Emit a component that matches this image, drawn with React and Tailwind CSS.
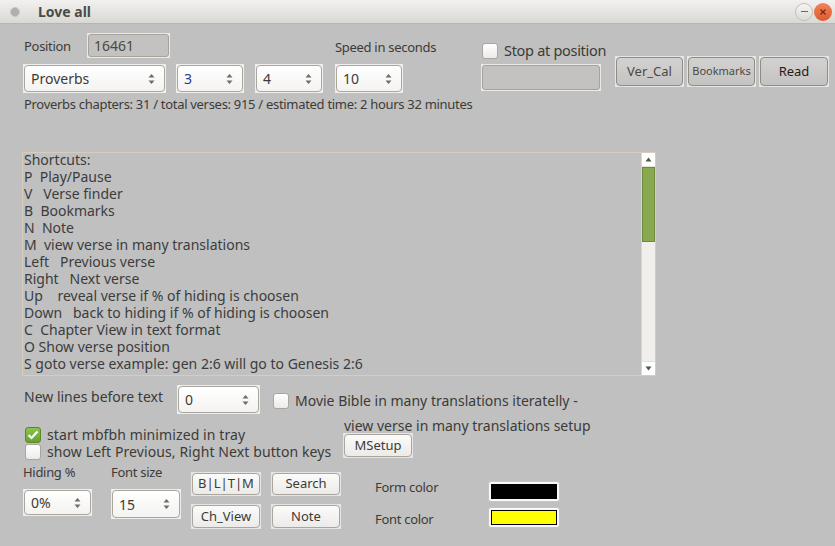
import React from 'react';

const font = { fontFamily: '"Noto Sans", "Open Sans", sans-serif' };

function Arrows() {
  return (
    <svg width="7" height="12" viewBox="0 0 7 12" className="shrink-0">
      <path d="M3.5 1 L6.5 4.5 L0.5 4.5 Z" fill="#6f6c66" />
      <path d="M3.5 11 L6.5 7.5 L0.5 7.5 Z" fill="#6f6c66" />
    </svg>
  );
}

function Spin({ value, w, h, blue }) {
  return (
    <div className={`bg-[#efeeec] p-[1px] ${w} ${h}`}>
      <div className="h-full rounded-[4px] border border-[#aaa59d] bg-gradient-to-b from-white to-[#f4f3f1] flex items-center justify-between pl-[6px] pr-[9px]">
        <span className={`text-[14px] ${blue ? 'text-[#1d3e8a]' : 'text-[#3c3b37]'}`}>{value}</span>
        <Arrows />
      </div>
    </div>
  );
}

function Field({ value, w, h }) {
  return (
    <div className={`bg-[#ebe9e5] p-[1px] ${w} ${h}`}>
      <div className="h-full rounded-[3px] border border-[#a7a29a] bg-[#c3c2c0] flex items-center pl-[5px]">
        <span className="text-[14px] text-[#4a4945]">{value}</span>
      </div>
    </div>
  );
}

function GrayButton({ children, w, size = 'text-[13px]', dark }) {
  return (
    <div className={`bg-[#e6e5e3] p-[1px] h-[31px] ${w}`}>
      <div className={`h-full rounded-[4px] border border-[#8f8b85] bg-gradient-to-b from-[#d3d2d0] to-[#c4c3c1] flex items-center justify-center ${size} ${dark ? 'text-[#1c1c1c]' : 'text-[#4a4945]'}`}>
        {children}
      </div>
    </div>
  );
}

function Button({ children, w, h }) {
  return (
    <div className={`bg-[#e6e5e3] p-[1px] ${w} ${h}`}>
      <div className="h-full rounded-[4px] border border-[#aaa59d] bg-gradient-to-b from-[#fbfbfa] to-[#ecebe9] flex items-center justify-center text-[13px] text-[#3c3b37]">
        {children}
      </div>
    </div>
  );
}

function Check({ checked }) {
  if (checked) {
    return (
      <div className="w-[16px] h-[16px] rounded-[3px] border border-[#5b8a2a] bg-gradient-to-b from-[#8cc24c] to-[#6aa033] flex items-center justify-center shrink-0">
        <svg width="12" height="10" viewBox="0 0 12 10">
          <path d="M1.5 5 L4.5 8 L10.5 1.5" stroke="white" strokeWidth="2.2" fill="none" />
        </svg>
      </div>
    );
  }
  return (
    <div className="w-[16px] h-[16px] rounded-[3px] border border-[#aaa59e] bg-gradient-to-b from-white to-[#ecebe9] shrink-0" />
  );
}

const shortcuts = [
  'Shortcuts:',
  'P  Play/Pause',
  'V   Verse finder',
  'B  Bookmarks',
  'N  Note',
  'M  view verse in many translations',
  'Left   Previous verse',
  'Right   Next verse',
  'Up    reveal verse if % of hiding is choosen',
  'Down   back to hiding if % of hiding is choosen',
  'C  Chapter View in text format',
  'O Show verse position',
  'S goto verse example: gen 2:6 will go to Genesis 2:6',
];

export default function App() {
  return (
    <div style={font} className="w-[835px] h-[546px] bg-[#c0c0c0] flex flex-col overflow-hidden text-[#3c3b37]">
      {/* title bar */}
      <div className="h-[24px] shrink-0 bg-gradient-to-b from-[#f2f1ef] to-[#dad8d4] border-b border-[#b8b6b1] flex items-center pl-[10px] pr-[3px]">
        <div className="w-[10px] h-[10px] rounded-full bg-[#b0afab] border border-[#c9c8c4]" />
        <span className="ml-[18px] text-[14px] font-bold text-[#4c4b47]">Love all</span>
        <div className="ml-auto flex items-center gap-[1px]">
          <div className="w-[18px] h-[18px] rounded-full border border-[#c2c0bb] bg-gradient-to-b from-[#f6f5f3] to-[#dedcd8] flex items-center justify-center">
            <div className="w-[7px] h-[1.5px] bg-[#6a6863]" />
          </div>
          <div className="w-[18px] h-[18px] rounded-full bg-gradient-to-b from-[#f2835a] to-[#de5a2a] flex items-center justify-center">
            <svg width="8" height="8" viewBox="0 0 8 8">
              <path d="M1.5 1.5 L6.5 6.5 M6.5 1.5 L1.5 6.5" stroke="#7a2a10" strokeWidth="1.3" />
            </svg>
          </div>
        </div>
      </div>

      {/* top controls */}
      <div className="flex pt-[9px] pl-[23px]">
        <div className="w-[312px] flex flex-col">
          <div className="h-[25px] flex items-center">
            <span className="w-[64px] pl-[1px] pt-[3px] text-[13px] tracking-[-0.3px]">Position</span>
            <Field value="16461" w="w-[83px]" h="h-[25px]" />
          </div>
          <div className="mt-[6px] flex">
            <Spin value="Proverbs" w="w-[143px]" h="h-[29px]" />
            <div className="ml-[10px]"><Spin value="3" w="w-[68px]" h="h-[29px]" blue /></div>
            <div className="ml-[11px]"><Spin value="4" w="w-[68px]" h="h-[29px]" /></div>
          </div>
        </div>
        <div className="w-[146px] flex flex-col">
          <div className="h-[25px] flex items-center pt-[4px] text-[13px] tracking-[-0.3px] whitespace-nowrap">Speed in seconds</div>
          <div className="mt-[6px]"><Spin value="10" w="w-[68px]" h="h-[29px]" /></div>
        </div>
        <div className="w-[134px] flex flex-col">
          <div className="h-[31px] flex items-center pt-[5px] pl-[1px] gap-[6px] whitespace-nowrap">
            <Check />
            <span className="text-[14.5px] tracking-[-0.3px]">Stop at position</span>
          </div>
          <Field value="" w="w-[120px]" h="h-[27px]" />
        </div>
        <div className="pt-[23px] flex gap-[3px]">
          <GrayButton w="w-[69px]">Ver_Cal</GrayButton>
          <GrayButton w="w-[69px]" size="text-[11px]">Bookmarks</GrayButton>
          <GrayButton w="w-[70px]" dark>Read</GrayButton>
        </div>
      </div>

      <div className="mt-[3px] pl-[24px] text-[13px] tracking-[-0.3px] leading-[16px] whitespace-nowrap">
        Proverbs chapters: 31 / total verses: 915 / estimated time: 2 hours 32 minutes
      </div>

      {/* shortcuts text area */}
      <div className="mt-[40px] ml-[22px] w-[634px] h-[224px] border border-[#d6cdbf] flex">
        <div className="flex-1 pl-[1px] -mt-[2px] text-[14px] leading-[17px] text-[#3c3c3c] whitespace-pre">
          {shortcuts.map((s) => (
            <div key={s}>{s}</div>
          ))}
        </div>
        <div className="w-[14px] flex flex-col bg-[#f1efec] border-l border-[#ddd6cb]">
          <div className="h-[14px] bg-white border-b border-[#e4e0da] flex items-center justify-center">
            <svg width="7" height="5" viewBox="0 0 7 5"><path d="M3.5 0.5 L6.5 4.5 L0.5 4.5 Z" fill="#4b5a3a" /></svg>
          </div>
          <div className="h-[75px] bg-[#89a951] border border-[#6d8c3b]" />
          <div className="flex-1" />
          <div className="h-[14px] bg-white border-t border-[#e4e0da] flex items-center justify-center">
            <svg width="7" height="5" viewBox="0 0 7 5"><path d="M3.5 4.5 L6.5 0.5 L0.5 0.5 Z" fill="#4b5a3a" /></svg>
          </div>
        </div>
      </div>

      {/* new lines row */}
      <div className="mt-[9px] flex items-start h-[29px]">
        <span className="ml-[24px] w-[153px] pt-[1px] text-[14px]">New lines before text</span>
        <Spin value="0" w="w-[83px]" h="h-[29px]" />
        <div className="ml-[13px] pt-[5px] flex items-center gap-[6px] whitespace-nowrap">
          <Check />
          <span className="text-[14px]">Movie Bible in many translations iteratelly -</span>
        </div>
      </div>

      <div className="flex">
        <div className="ml-[25px] w-[318px] pt-[12px] flex flex-col">
          <div className="h-[17px] flex items-center gap-[6px] whitespace-nowrap">
            <Check checked />
            <span className="text-[14px] tracking-[0.1px]">start mbfbh minimized in tray</span>
          </div>
          <div className="h-[17px] flex items-center gap-[6px] whitespace-nowrap">
            <Check />
            <span className="text-[14px] tracking-[0.1px]">show Left Previous, Right Next button keys</span>
          </div>
        </div>
        <div className="flex flex-col">
          <div className="mt-[4px] ml-[1px] leading-[15px] text-[14px] whitespace-nowrap">view verse in many translations setup</div>
          <Button w="w-[70px]" h="h-[25px]">MSetup</Button>
        </div>
      </div>

      {/* bottom row */}
      <div className="flex items-start">
        <div className="ml-[23px] w-[69px] flex flex-col">
          <span className="mt-[5px] leading-[14px] text-[13px] tracking-[-0.3px]">Hiding %</span>
          <div className="mt-[10px]"><Spin value="0%" w="w-[69px]" h="h-[27px]" /></div>
        </div>
        <div className="ml-[19px] w-[69px] flex flex-col">
          <span className="mt-[5px] leading-[14px] text-[13px] tracking-[-0.3px]">Font size</span>
          <div className="mt-[10px]"><Spin value="15" w="w-[70px]" h="h-[30px]" /></div>
        </div>
        <div className="ml-[11px] pt-[12px] flex flex-col gap-[8px]">
          <Button w="w-[70px]" h="h-[24px]">B|L|T|M</Button>
          <Button w="w-[70px]" h="h-[25px]">Ch_View</Button>
        </div>
        <div className="ml-[10px] pt-[12px] flex flex-col gap-[8px]">
          <Button w="w-[70px]" h="h-[24px]">Search</Button>
          <Button w="w-[70px]" h="h-[25px]">Note</Button>
        </div>
        <div className="ml-[34px] w-[113px] flex flex-col text-[13px] tracking-[-0.3px]">
          <span className="mt-[19px] leading-[16px]">Form color</span>
          <span className="mt-[16px] leading-[16px]">Font color</span>
        </div>
        <div className="flex flex-col">
          <div className="mt-[21px] w-[72px] h-[21px] rounded-[3px] bg-[#faf9f8] border border-[#c9c5be] p-[2px] flex">
            <div className="flex-1 bg-black" />
          </div>
          <div className="mt-[5px] w-[72px] h-[21px] rounded-[3px] bg-[#faf9f8] border border-[#c9c5be] p-[2px] flex">
            <div className="flex-1 bg-[#ffff00] border border-black" />
          </div>
        </div>
      </div>
    </div>
  );
}
